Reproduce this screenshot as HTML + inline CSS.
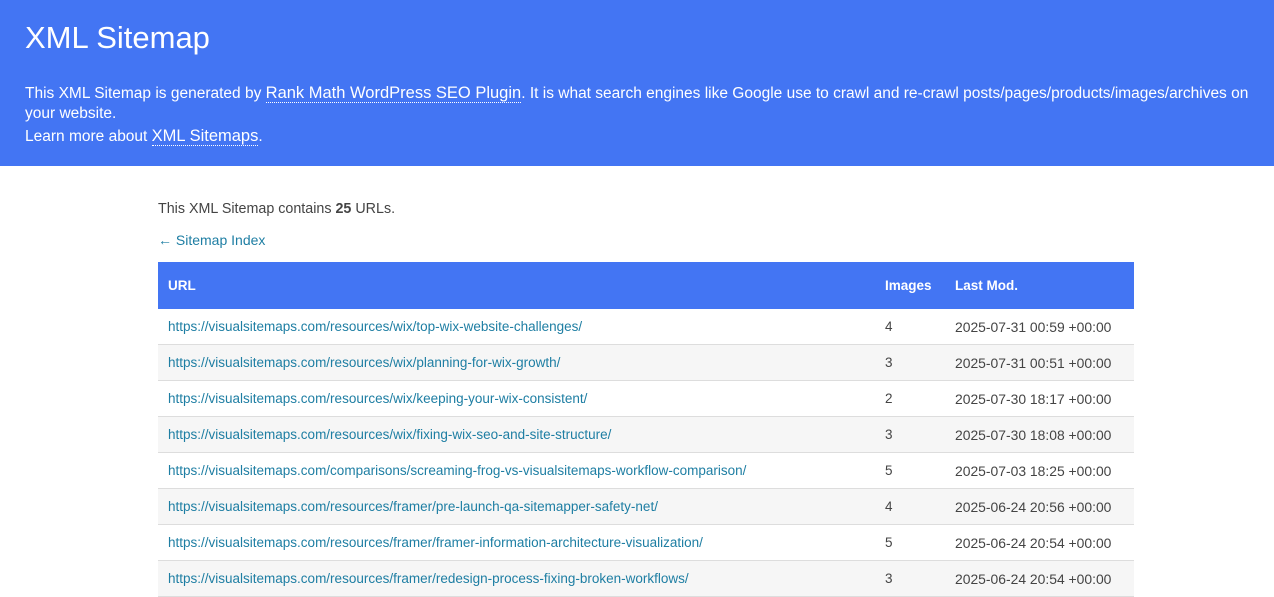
<!DOCTYPE html>
<html><head><meta charset="utf-8"><style>
body{margin:0;font-family:"Liberation Sans",sans-serif;color:#444;background:#fff;width:1274px;height:596px;overflow:hidden}
#hd{background:#4375f3;height:166px;color:#fff;padding:0 25px;box-sizing:border-box;position:relative}
#hd h1{position:absolute;top:20px;left:25px;margin:0;font-size:31px;font-weight:normal}
#hd .p{position:absolute;left:25px;font-size:15.5px;line-height:20px;width:1244px}
#hd a{color:#fff;text-decoration:none;border-bottom:1px dotted #fff;font-size:16.5px}
.t1{position:absolute;top:201px;left:158px;font-size:14.3px}
.t2{position:absolute;top:232px;left:158px;font-size:14px;color:#1e7ea3}
table{position:absolute;top:262px;left:158px;width:976px;border-collapse:collapse;font-size:13.5px}
th{background:#4375f3;color:#fff;text-align:left;height:47px;padding:0 10px;font-size:13.5px}
td{height:35px;padding:0 10px;border-bottom:1px solid #ddd}
td.d{font-size:13.9px}
tr:nth-child(even) td{background:#f6f6f6}
td a{color:#1e7ea3;text-decoration:none}
</style></head><body>
<div id="hd"><h1>XML Sitemap</h1>
<div class="p" style="top:83px">This XML Sitemap is generated by <a>Rank Math WordPress SEO Plugin</a>. It is what search engines like Google use to crawl and re-crawl posts/pages/products/images/archives on your website.</div>
<div class="p" style="top:126px">Learn more about <a>XML Sitemaps</a>.</div></div>
<div class="t1">This XML Sitemap contains <b>25</b> URLs.</div>
<div class="t2">← Sitemap Index</div>
<table><thead><tr><th style="width:697px">URL</th><th style="width:50px">Images</th><th>Last Mod.</th></tr></thead><tbody>
<tr><td><a>https://visualsitemaps.com/resources/wix/top-wix-website-challenges/</a></td><td>4</td><td class="d">2025-07-31 00:59 +00:00</td></tr>
<tr><td><a>https://visualsitemaps.com/resources/wix/planning-for-wix-growth/</a></td><td>3</td><td class="d">2025-07-31 00:51 +00:00</td></tr>
<tr><td><a>https://visualsitemaps.com/resources/wix/keeping-your-wix-consistent/</a></td><td>2</td><td class="d">2025-07-30 18:17 +00:00</td></tr>
<tr><td><a>https://visualsitemaps.com/resources/wix/fixing-wix-seo-and-site-structure/</a></td><td>3</td><td class="d">2025-07-30 18:08 +00:00</td></tr>
<tr><td><a>https://visualsitemaps.com/comparisons/screaming-frog-vs-visualsitemaps-workflow-comparison/</a></td><td>5</td><td class="d">2025-07-03 18:25 +00:00</td></tr>
<tr><td><a>https://visualsitemaps.com/resources/framer/pre-launch-qa-sitemapper-safety-net/</a></td><td>4</td><td class="d">2025-06-24 20:56 +00:00</td></tr>
<tr><td><a>https://visualsitemaps.com/resources/framer/framer-information-architecture-visualization/</a></td><td>5</td><td class="d">2025-06-24 20:54 +00:00</td></tr>
<tr><td><a>https://visualsitemaps.com/resources/framer/redesign-process-fixing-broken-workflows/</a></td><td>3</td><td class="d">2025-06-24 20:54 +00:00</td></tr>
</tbody></table>
</body></html>
